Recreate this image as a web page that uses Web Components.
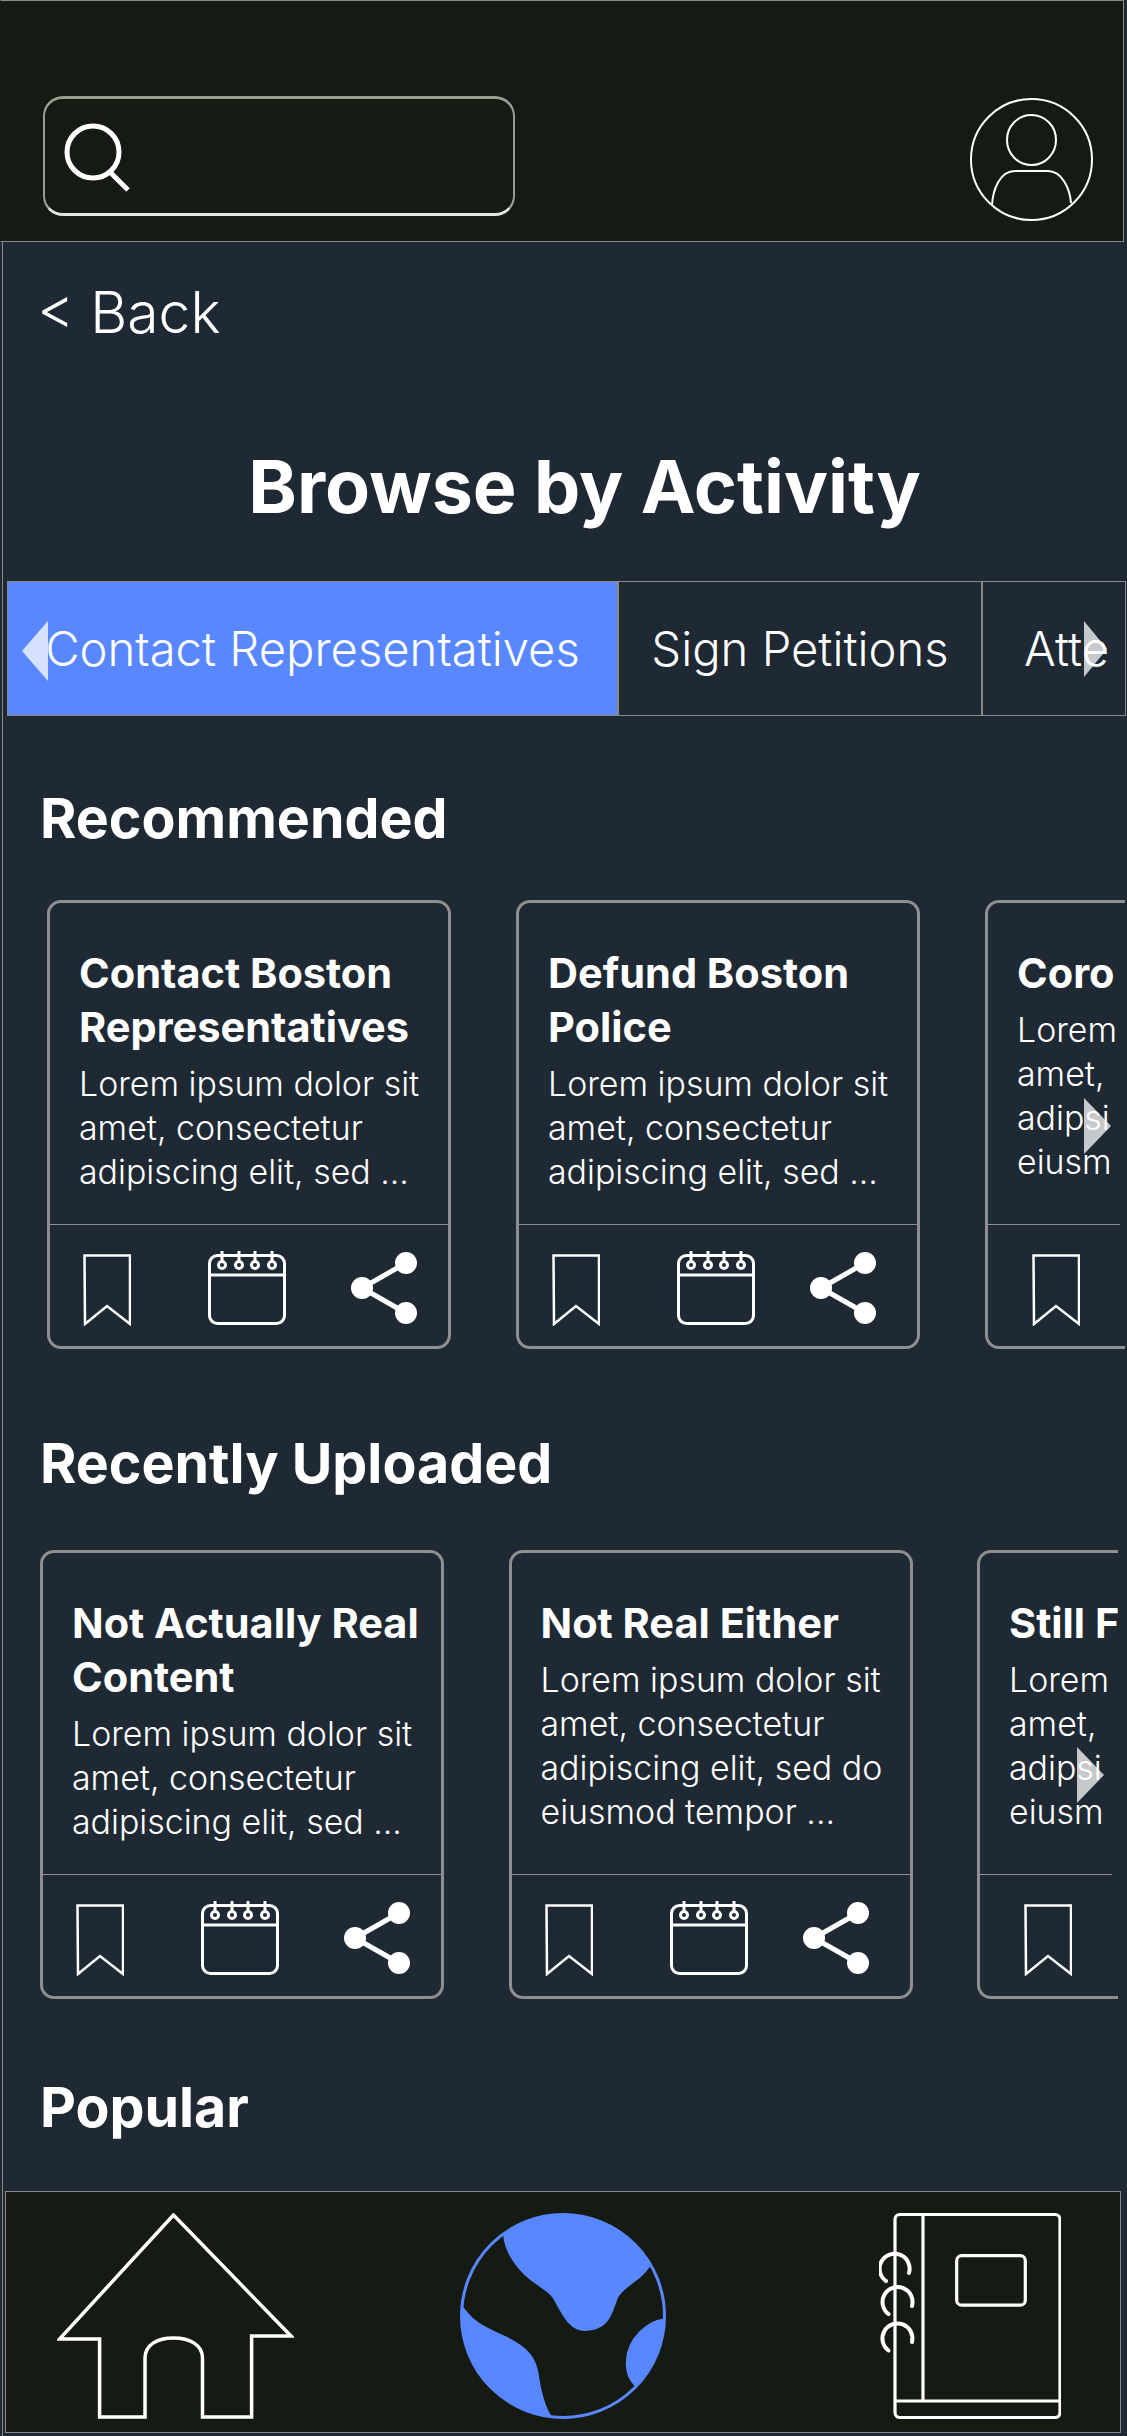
<!DOCTYPE html>
<html>
<head>
<meta charset="utf-8">
<title>Browse by Activity</title>
<style>
	html, body { margin: 0; padding: 0; background: #1f2933; }
	body { font-family: "Inter", "Liberation Sans", sans-serif; color: #fff; }
</style>
</head>
<body>
<app-shell>
	<top-bar slot="top"></top-bar>

	<back-link>&lt; Back</back-link>
	<page-title>Browse by Activity</page-title>

	<tab-strip>
		<tab-item active style="width:611px">Contact Representatives</tab-item>
		<tab-item style="width:364px">Sign Petitions</tab-item>
		<tab-item style="width:144px" start>Atte</tab-item>
	</tab-strip>

	<section-title style="margin-top:67px">Recommended</section-title>
	<card-row style="margin-top:47px;--row-left:47px;--row-gap:65px;--row-cut:1px;--arrow-right:15px;--arrow-top:198px">
		<action-card>
			<span slot="title">Contact Boston<br>Representatives</span>
			Lorem ipsum dolor sit<br>amet, consectetur<br>adipiscing elit, sed ...
		</action-card>
		<action-card second>
			<span slot="title">Defund Boston<br>Police</span>
			Lorem ipsum dolor sit<br>amet, consectetur<br>adipiscing elit, sed ...
		</action-card>
		<action-card partial>
			<span slot="title">Coro</span>
			Lorem<br>amet,<br>adipsi<br>eiusm
		</action-card>
	</card-row>

	<section-title style="margin-top:79px">Recently Uploaded</section-title>
	<card-row style="margin-top:52px;--row-left:40px;--row-gap:64.5px;--row-cut:8px;--arrow-right:22px;--arrow-top:197px">
		<action-card>
			<span slot="title">Not Actually Real<br>Content</span>
			Lorem ipsum dolor sit<br>amet, consectetur<br>adipiscing elit, sed ...
		</action-card>
		<action-card second>
			<span slot="title">Not Real Either</span>
			Lorem ipsum dolor sit<br>amet, consectetur<br>adipiscing elit, sed do<br>eiusmod tempor ...
		</action-card>
		<action-card partial>
			<span slot="title">Still F</span>
			Lorem<br>amet,<br>adipsi<br>eiusm
		</action-card>
	</card-row>

	<section-title style="margin-top:73px">Popular</section-title>

	<bottom-nav slot="bottom"></bottom-nav>
</app-shell>

<script>
(function() {
	// small helper, every element below is just a template + open shadow root
	function define(name, html) {
		let template = document.createElement("template");
		template.innerHTML = html;
		customElements.define(name, class extends HTMLElement {
			constructor() {
				super();
				this.attachShadow({mode: "open"}).appendChild(template.content.cloneNode(true));
			}
		});
	}

	define("app-shell", `
		<style>
		:host { display: block; width: 1127px; height: 2436px; overflow: hidden; }
		.page { display: flex; flex-direction: column; height: 100%; }
		main {
			flex: 1;
			min-height: 0;
			display: flex;
			flex-direction: column;
			background: #1f2933;
			margin-left: 2px;
			margin-right: 1px;
			border-left: 1px solid #8a8a8a;
			box-sizing: border-box;
		}
		.content { flex: 1; min-height: 0; overflow: hidden; }
		</style>
		<div class="page">
			<slot name="top"></slot>
			<main>
				<div class="content"><slot></slot></div>
				<slot name="bottom"></slot>
			</main>
		</div>
	`);

	define("top-bar", `
		<style>
		:host {
			display: flex;
			flex: none;
			box-sizing: border-box;
			height: 242px;
			width: 1124px;
			padding: 95px 30px 0 42px;
			justify-content: space-between;
			align-items: flex-start;
			background: #151a13;
			border: 1px solid #8a8a8a;
			border-left-color: #151a13;
		}
		.search {
			box-sizing: border-box;
			width: 472px;
			height: 120px;
			border: 2px solid #9b9c92;
			border-top-width: 3px;
			border-bottom: 3px solid #e4e4e0;
			border-radius: 20px;
			padding: 23px 0 0 19px;
		}
		svg { display: block; }
		</style>
		<div class="search">
			<svg width="68" height="70" viewBox="0 0 68 70" fill="none" stroke="#fff">
				<circle cx="29" cy="30" r="26" stroke-width="5"/>
				<path d="M47 51 L64 68" stroke-width="5"/>
			</svg>
		</div>
		<svg width="123" height="125" viewBox="0 0 123 125" fill="none" stroke="#fff" stroke-width="2" style="margin-top:1px">
			<circle cx="61.5" cy="62.5" r="60.5"/>
			<ellipse cx="61.5" cy="43" rx="24.5" ry="25"/>
			<path d="M22 108 C23 92 30 74 45 74 H78 C92 74 100 92 101 106"/>
		</svg>
	`);

	define("back-link", `
		<style>
		:host { display: block; margin: 41px 0 0 34px; font-size: 57px; line-height: 60px; font-weight: 300; }
		</style>
		<slot></slot>
	`);

	define("page-title", `
		<style>
		:host { display: block; margin-top: 99px; text-align: center; font-size: 73.5px; line-height: 90px; font-weight: 700; padding-left: 40px; }
		</style>
		<slot></slot>
	`);

	define("tab-strip", `
		<style>
		:host { display: block; position: relative; margin: 49px 0 0 4px; height: 135px; }
		.tabs { display: flex; height: 100%; overflow: hidden; }
		.arrow { position: absolute; top: 40px; width: 0; height: 0; border-style: solid; border-color: transparent; }
		.left { left: 15px; border-width: 30px 26px 30px 0; border-right-color: rgba(255,255,255,.75); }
		.right { left: 1077px; border-width: 28px 0 28px 23px; border-left-color: rgba(255,255,255,.75); }
		</style>
		<div class="tabs"><slot></slot></div>
		<div class="arrow left"></div>
		<div class="arrow right"></div>
	`);

	define("tab-item", `
		<style>
		:host {
			display: flex;
			flex: none;
			box-sizing: border-box;
			height: 135px;
			align-items: center;
			justify-content: center;
			border: 1px solid #8a8a8a;
			font-size: 47.2px;
			font-weight: 300;
			white-space: nowrap;
		}
		:host([active]) { background: #5887ff; }
		:host([start]) { justify-content: flex-start; padding-left: 41px; }
		</style>
		<span><slot></slot></span>
	`);

	define("section-title", `
		<style>
		:host { display: block; margin-left: 37px; font-size: 55.5px; line-height: 70px; font-weight: 700; }
		</style>
		<slot></slot>
	`);

	define("card-row", `
		<style>
		:host { display: block; position: relative; height: 449px; }
		.row {
			display: flex;
			gap: var(--row-gap);
			height: 100%;
			box-sizing: border-box;
			padding-left: calc(var(--row-left) - 3px);
			margin-right: var(--row-cut);
			overflow: hidden;
		}
		.arrow {
			position: absolute;
			top: var(--arrow-top);
			right: var(--arrow-right);
			width: 0; height: 0;
			border-style: solid;
			border-color: transparent;
			border-width: 28px 0 28px 27px;
			border-left-color: rgba(255,255,255,.75);
		}
		</style>
		<div class="row"><slot></slot></div>
		<div class="arrow"></div>
	`);

	const bookmark = `<svg width="48" height="72" viewBox="0 0 48 72" fill="none" stroke="#fff" stroke-width="2.5" class="mark"><path d="M1.5 1.5 H47 V70 L24 52 L2 70 Z"/></svg>`;
	const calendar = `<svg width="78" height="74" viewBox="0 0 78 74" fill="none" stroke="#fff" stroke-width="3">
		<rect x="1.5" y="4.5" width="75" height="68" rx="8"/>
		<path d="M1.5 24 H76.5"/>
		<g>
			<path d="M14 0 V10 M31 0 V10 M47 0 V10 M64 0 V10"/>
			<circle cx="14" cy="14" r="3.5"/><circle cx="31" cy="14" r="3.5"/><circle cx="47" cy="14" r="3.5"/><circle cx="64" cy="14" r="3.5"/>
		</g>
	</svg>`;
	const share = `<svg width="66" height="72" viewBox="0 0 66 72" fill="#fff" stroke="none">
		<path d="M55 11 L11 36 L55 61" fill="none" stroke="#fff" stroke-width="5"/>
		<circle cx="55" cy="11" r="11"/><circle cx="11" cy="36" r="11"/><circle cx="55" cy="61" r="11"/>
	</svg>`;

	define("action-card", `
		<style>
		:host {
			display: flex;
			flex-direction: column;
			flex: none;
			box-sizing: border-box;
			width: 404px;
			height: 449px;
			border: 3px solid #8f8f8f;
			border-radius: 14px;
		}
		.text { flex: 1; padding: 43px 0 0 29px; white-space: nowrap; }
		.title { font-size: 41.5px; line-height: 54px; font-weight: 700; margin-bottom: 8px; }
		.body { font-size: 33.9px; line-height: 44px; font-weight: 300; }
		.actions {
			flex: none;
			box-sizing: border-box;
			height: 122px;
			border-top: 1px solid #8f8f8f;
			display: flex;
			align-items: center;
			padding: 5px 0 0 33px;
		}
		.mark { margin-top: 3px; }
		.gap1 { margin-left: 77px; display: flex; }
		.gap2 { margin-left: 65px; display: flex; }
		.actions svg { display: block; }
		:host([second]) .gap2 { margin-left: 55px; }
		:host([partial]) .actions { width: 132px; padding-left: 44px; }
		:host([partial]) .gap1, :host([partial]) .gap2 { display: none; }
		</style>
		<div class="text">
			<div class="title"><slot name="title"></slot></div>
			<div class="body"><slot></slot></div>
		</div>
		<div class="actions">
			${bookmark}
			<div class="gap1">${calendar}</div>
			<div class="gap2">${share}</div>
		</div>
	`);

	define("bottom-nav", `
		<style>
		:host {
			display: flex;
			flex: none;
			box-sizing: border-box;
			height: 242px;
			margin: 0 5px 3px 2px;
			padding: 21px 0 0 51px;
			align-items: flex-start;
			background: #151a13;
			border: 1px solid #8a8a8a;
		}
		svg { display: block; flex: none; }
		</style>
		<svg width="237" height="206" viewBox="0 0 237 206" fill="none" stroke="#fff" stroke-width="3.5">
			<path d="M116.5 2 L2.5 126 H42.6 V204 H88 V145 C88 132 100 125 116.5 125 C133 125 145.5 132 145.5 145 V204 H194.6 V123 H234 Z"/>
		</svg>
		<svg width="207" height="206" viewBox="0 0 207 206" style="margin-left:166px">
			<circle cx="103" cy="103" r="101.5" fill="none" stroke="#5887ff" stroke-width="3"/>
			<g fill="#5887ff" stroke="#5887ff" stroke-width="2.5">
				<path d="M44.5 22.3 A100 100 0 0 1 189.2 52.3 C180 68 163 72 157 84 C151 98 150 116 125 116.7 C110 117 103 100 97 90 C93 80 85 76 78 71 C60 60 46 40 44.5 22.3 Z"/>
				<path d="M4 97 C12 108 20 113 44 124 C68 135 76 146 78 165 C80 180 85 195 89 201.5 A100 100 0 0 1 4 97 Z"/>
				<path d="M203 107 C190 108 167 125 167 150 C167 160 171 168 175.4 172 A100 100 0 0 0 203 107 Z"/>
			</g>
		</svg>
		<svg width="182" height="206" viewBox="0 0 182 206" fill="none" stroke="#fff" stroke-width="3.2" style="margin-left:212px">
			<rect x="16" y="1.5" width="165" height="203" rx="5"/>
			<path d="M44 1.5 V188 M16 188 H181"/>
			<rect x="77.7" y="42.7" width="68.6" height="49.5" rx="5"/>
			<g stroke-width="4" stroke-linecap="round">
				<path d="M7 68 A15 15 0 1 1 30 60"/>
				<path d="M9.5 101 A15 15 0 1 1 33 93"/>
				<path d="M9.5 137.5 A15 15 0 1 1 33 129"/>
			</g>
		</svg>
	`);
})();
</script>
</body>
</html>
